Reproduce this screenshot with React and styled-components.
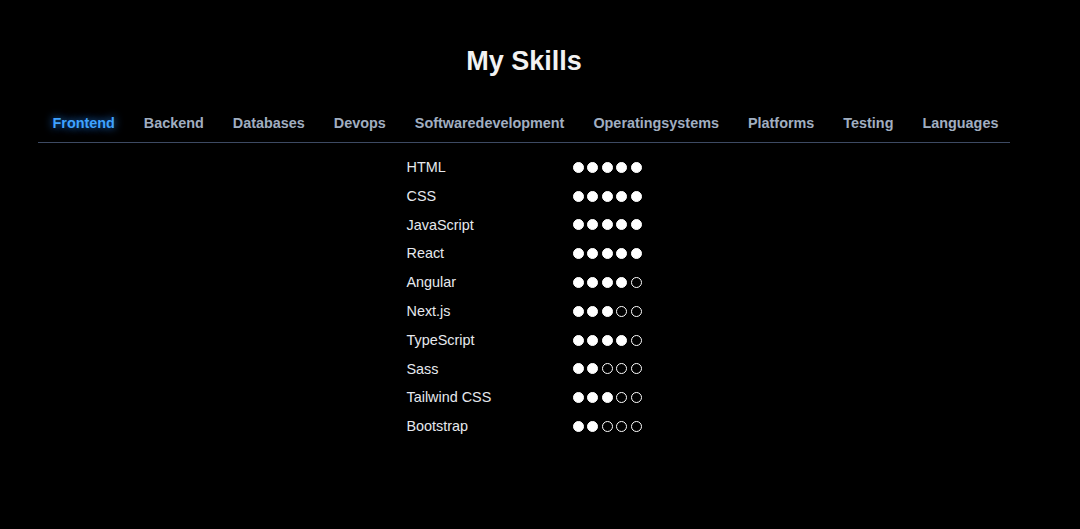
import React, { useState } from 'react';
import styled, { createGlobalStyle } from 'styled-components';

const TABS = [
  'Frontend',
  'Backend',
  'Databases',
  'Devops',
  'Softwaredevelopment',
  'Operatingsystems',
  'Platforms',
  'Testing',
  'Languages',
];

const FRONTEND = [
  { name: 'HTML', level: 5 },
  { name: 'CSS', level: 5 },
  { name: 'JavaScript', level: 5 },
  { name: 'React', level: 5 },
  { name: 'Angular', level: 4 },
  { name: 'Next.js', level: 3 },
  { name: 'TypeScript', level: 4 },
  { name: 'Sass', level: 2 },
  { name: 'Tailwind CSS', level: 3 },
  { name: 'Bootstrap', level: 2 },
];

const App = () => {
  const [active, setActive] = useState('Frontend');

  return (
    <>
      <GlobalStyle />
      <SkillsSection>
        <Title>My Skills</Title>
        <TabBar>
          {TABS.map((tab) => (
            <Tab key={tab} $active={tab === active} onClick={() => setActive(tab)}>
              {tab}
            </Tab>
          ))}
        </TabBar>
        <SkillList>
          {FRONTEND.map((skill) => (
            <SkillRow key={skill.name}>
              <SkillName>{skill.name}</SkillName>
              <Dots>
                {[1, 2, 3, 4, 5].map((n) => (
                  <Dot key={n} $filled={n <= skill.level} />
                ))}
              </Dots>
            </SkillRow>
          ))}
        </SkillList>
      </SkillsSection>
    </>
  );
};

export default App;


const GlobalStyle = createGlobalStyle`
  html, body {
    margin: 0;
    background: #000;
    font-family: "Liberation Sans", Arial, sans-serif;
  }
`;

const SkillsSection = styled.section`
  width: 972px;
  margin-left: 38px;
  padding-top: 45px;
`;

const Title = styled.h2`
  margin: 0;
  text-align: center;
  font-size: 27px;
  line-height: 32px;
  font-weight: 700;
  color: #f2f2f2;
`;

const TabBar = styled.nav`
  display: flex;
  margin-top: 38px;
  border-bottom: 1px solid #3d4a63;
`;

const Tab = styled.button`
  border: 0;
  background: none;
  padding: 0 14.5px 11px;
  font-family: inherit;
  font-size: 14.4px;
  line-height: 16px;
  font-weight: 700;
  cursor: pointer;
  color: ${({ $active }) => ($active ? '#3fa2ff' : '#a0aec0')};
  text-shadow: ${({ $active }) => ($active ? '0 0 8px rgba(40, 140, 255, 0.9)' : 'none')};
`;

const SkillList = styled.div`
  display: grid;
  grid-template-columns: 166px auto;
  justify-content: center;
  margin-top: 10px;
`;

const SkillRow = styled.div`
  display: contents;
`;

const SkillName = styled.span`
  padding: 6px 0;
  font-size: 14.4px;
  line-height: 16.8px;
  color: #e6e9ee;
`;

const Dots = styled.span`
  display: flex;
  align-items: center;
  gap: 3.5px;
`;

const Dot = styled.span`
  box-sizing: border-box;
  width: 11px;
  height: 11px;
  border-radius: 50%;
  border: 1px solid #fff;
  background: ${({ $filled }) => ($filled ? '#fff' : 'transparent')};
`;
